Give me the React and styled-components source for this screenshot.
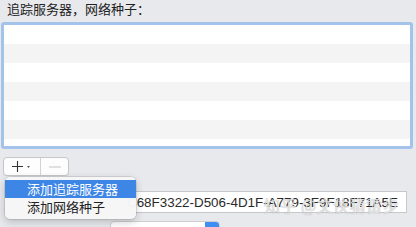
import React from "react";
import styled, { createGlobalStyle } from "styled-components";

const GlobalStyle = createGlobalStyle`
  html, body {
    margin: 0;
    padding: 0;
    background: #e8e9ed;
    overflow: hidden;
  }
  body {
    font-family: "Liberation Sans", "Noto Sans CJK SC", sans-serif;
  }
`;

const rows = [0, 1, 2, 3, 4, 5, 6];

const App = () => {
  return (
    <Page>
      <GlobalStyle />
      <Title>追踪服务器，网络种子：</Title>
      <ListBox>
        {rows.map((i) => (
          <Row key={i} $odd={i % 2 === 1} />
        ))}
      </ListBox>
      <Toolbar>
        <Segment $w={36}>
          <svg width="22" height="13" viewBox="0 0 22 13">
            <path d="M1 6.5h11M6.5 1v11" stroke="#333" strokeWidth="1.1" fill="none" />
            <path d="M16 6h3l-1.5 2z" fill="#555" />
          </svg>
        </Segment>
        <Segment $w={27} $last>
          <svg width="12" height="12" viewBox="0 0 12 12">
            <path d="M0 6h12" stroke="#c9c9c9" strokeWidth="1.1" fill="none" />
          </svg>
        </Segment>
      </Toolbar>
      <FieldRow>
        <Field>C68F3322-D506-4D1F-A779-3F9F18F71A5E</Field>
      </FieldRow>
      <PopupRow>
        <Popup>
          <PopupArrow />
        </Popup>
      </PopupRow>
      <Menu>
        <MenuItem $active>添加追踪服务器</MenuItem>
        <MenuItem>添加网络种子</MenuItem>
      </Menu>
      <Watermark>知乎 @文侠猜雷步</Watermark>
    </Page>
  );
};

export default App;

const Page = styled.div`
  position: relative;
  width: 416px;
  height: 227px;
  display: flex;
  flex-direction: column;
  overflow: hidden;

  & > * {
    flex-shrink: 0;
  }
`;

const Title = styled.div`
  height: 22px;
  padding-left: 7px;
  font-family: "Noto Sans CJK SC", sans-serif;
  font-size: 13px;
  line-height: 18px;
  color: #222;
`;

const ListBox = styled.div`
  margin-left: 1px;
  width: 406px;
  height: 121px;
  border: 3px solid #a4c3ea;
  border-radius: 3px;
  background: #fff;
  overflow: hidden;
`;

const Row = styled.div`
  height: 19px;
  background: ${(p) => (p.$odd ? "#f4f4f5" : "#ffffff")};
`;

const Toolbar = styled.div`
  display: flex;
  margin: 8px 0 0 3px;
  width: fit-content;
  height: 17px;
  border: 1px solid #c6c6c8;
  border-radius: 4px;
  background: #fdfdfd;
  box-shadow: 0 0.5px 0 rgba(0, 0, 0, 0.05);
`;

const Segment = styled.div`
  width: ${(p) => p.$w}px;
  display: flex;
  align-items: center;
  justify-content: center;
  border-right: ${(p) => (p.$last ? "none" : "1px solid #d3d3d5")};
`;

const FieldRow = styled.div`
  display: flex;
  margin-top: 15px;
  padding-left: 110px;
`;

const Field = styled.div`
  width: 279px;
  height: 20px;
  padding-left: 16px;
  border: 1px solid #c8c8ca;
  background: #fff;
  font-size: 13.4px;
  line-height: 21px;
  color: #2a2a2a;
  white-space: nowrap;
  overflow: hidden;
`;

const PopupRow = styled.div`
  display: flex;
  margin-top: 8px;
  padding-left: 110px;
`;

const Popup = styled.div`
  position: relative;
  width: 108px;
  height: 20px;
  border: 1px solid #cfcfd1;
  border-radius: 4px;
  background: #fff;
  overflow: hidden;
`;

const PopupArrow = styled.div`
  position: absolute;
  right: 0;
  top: 0;
  width: 14px;
  height: 100%;
  background: #3f8ef4;
`;

const Menu = styled.div`
  position: absolute;
  left: 5px;
  top: 177px;
  width: 131px;
  padding: 3px 0;
  background: rgba(246, 246, 247, 0.98);
  border-radius: 5px;
  box-shadow: 0 0 0 0.5px rgba(0, 0, 0, 0.18), 0 3px 8px rgba(0, 0, 0, 0.2);
`;

const MenuItem = styled.div`
  height: 18px;
  padding-left: 22px;
  font-family: "Noto Sans CJK SC", sans-serif;
  font-size: 13px;
  line-height: 18px;
  color: ${(p) => (p.$active ? "#fff" : "#222")};
  background: ${(p) => (p.$active ? "#3d86e6" : "transparent")};
`;

const Watermark = styled.div`
  position: absolute;
  left: 264px;
  top: 195px;
  font-family: "Noto Sans CJK SC", sans-serif;
  font-size: 16px;
  line-height: 20px;
  color: rgba(255, 255, 255, 0.7);
  text-shadow: 0 0 1px rgba(110, 110, 110, 0.7);
  letter-spacing: 0.5px;
`;
